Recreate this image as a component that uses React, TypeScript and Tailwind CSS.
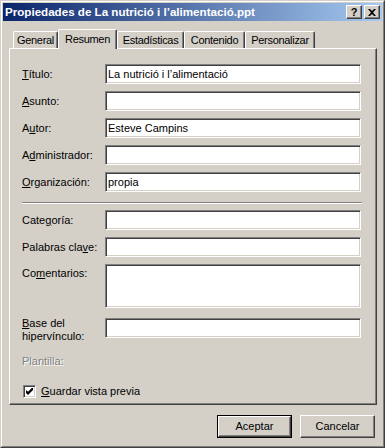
import React from "react";

const sunken =
  "bg-white border border-t-[#808080] border-l-[#808080] border-r-white border-b-white shadow-[inset_1px_1px_#404040,inset_-1px_-1px_#d4d0c8]";

function Input({ value, h = 20 }: { value?: string; h?: number }) {
  return (
    <div
      className={`${sunken} w-[256px] shrink-0 pl-[2px] leading-[14px] pt-[2px] whitespace-nowrap overflow-hidden`}
      style={{ height: h }}
    >
      {value}
    </div>
  );
}

function Row({
  label,
  value,
  h = 20,
  mt,
  labelPad = 3,
}: {
  label: React.ReactNode;
  value?: string;
  h?: number;
  mt: string;
  labelPad?: number;
}) {
  return (
    <div className={`flex items-start ${mt}`}>
      <div className="w-[83px] shrink-0 leading-[14px]" style={{ paddingTop: labelPad }}>
        {label}
      </div>
      <Input value={value} h={h} />
    </div>
  );
}

function Tab({ label, w, selected }: { label: string; w: number; selected?: boolean }) {
  return (
    <div
      className={
        selected
          ? "relative z-10 h-[20px] -mb-[1px] bg-[#d4d0c8] border-l border-t border-r border-l-white border-t-white border-r-[#404040] shadow-[inset_-1px_0_#808080] rounded-t-[2px] flex justify-center pt-[2px] leading-[14px] tracking-[-0.3px]"
          : "h-[17px] bg-[#d4d0c8] border-l border-t border-r border-l-white border-t-white border-r-[#404040] shadow-[inset_-1px_0_#808080] rounded-t-[2px] flex justify-center pt-[1px] leading-[14px] tracking-[-0.3px]"
      }
      style={{ width: w }}
    >
      {label}
    </div>
  );
}

const raised =
  "bg-[#d4d0c8] border border-t-white border-l-white border-r-[#404040] border-b-[#404040] shadow-[inset_-1px_-1px_#808080]";

export default function App() {
  return (
    <div className="w-[385px] h-[448px] bg-[#d4d0c8] font-['Liberation_Sans',Arial,sans-serif] text-[11px] text-black border border-t-[#d4d0c8] border-l-[#d4d0c8] border-r-[#404040] border-b-[#404040]">
      <div className="w-full h-full border border-t-white border-l-white border-r-[#808080] border-b-[#808080] p-[1px] flex flex-col">
        {/* Title bar */}
        <div className="h-[18px] shrink-0 flex items-center justify-between bg-[linear-gradient(to_right,#0a246a,#a6caf0)] pl-[2px] pr-[2px]">
          <div className="text-white font-bold text-[11.6px] leading-[14px] whitespace-nowrap">
            Propiedades de La nutrició i l’alimentació.ppt
          </div>
          <div className="flex gap-[2px]">
            <div className={`${raised} w-[16px] h-[14px] flex items-center justify-center font-bold text-[11px] leading-[11px]`}>
              ?
            </div>
            <div className={`${raised} w-[16px] h-[14px] flex items-center justify-center`}>
              <svg width="8" height="7" viewBox="0 0 8 7">
                <path d="M0 0h2l2 2 2-2h2L5 3.5 8 7H6L4 5 2 7H0l3-3.5z" fill="#000" />
              </svg>
            </div>
          </div>
        </div>

        {/* Tabs */}
        <div className="mt-[8px] ml-[10px] flex items-end h-[19px]">
          <Tab label="General" w={45} />
          <Tab label="Resumen" w={59} selected />
          <Tab label="Estadísticas" w={67} />
          <Tab label="Contenido" w={61} />
          <Tab label="Personalizar" w={70} />
        </div>

        {/* Panel */}
        <div className="ml-[6px] w-[368px] h-[357px] border border-t-white border-l-white border-r-[#404040] border-b-[#404040] shadow-[inset_-1px_-1px_#808080] pl-[12px] pt-[15px] flex flex-col">
          <Row mt="mt-0" label={<><u>T</u>ítulo:</>} value="La nutrició i l’alimentació" />
          <Row mt="mt-[7px]" label={<><u>A</u>sunto:</>} />
          <Row mt="mt-[7px]" label={<>A<u>u</u>tor:</>} value="Esteve Campins" />
          <Row mt="mt-[7px]" label={<>A<u>d</u>ministrador:</>} />
          <Row mt="mt-[7px]" label={<><u>O</u>rganización:</>} value="propia" />

          <div className="mt-[10px] w-[340px] h-[2px] border-t border-t-[#808080] border-b border-b-white" />

          <Row mt="mt-[6px]" label={<>Cate<u>g</u>oría:</>} />
          <Row mt="mt-[7px]" label={<>Palabras cla<u>v</u>e:</>} />
          <Row mt="mt-[7px]" label={<>Co<u>m</u>entarios:</>} h={44} labelPad={2} />
          <div className="flex items-start mt-[10px]">
            <div className="w-[83px] shrink-0 leading-[13px] -mt-[1px]">
              <u>B</u>ase del
              <br />
              hipervínculo:
            </div>
            <Input h={20} />
          </div>

          <div className="mt-[11px] leading-[14px] text-[#808080] [text-shadow:1px_1px_0_#fff]">Plantilla:</div>

          <div className="mt-[16px] flex items-center">
            <div className={`${sunken} ml-[1px] w-[13px] h-[13px] flex items-center justify-center`}>
              <svg width="7" height="7" viewBox="0 0 7 7">
                <path d="M0 2v3l2 2 5-5V-1L2 4z" fill="#000" />
                <path d="M0 2.5l2 2 5-5" stroke="#000" strokeWidth="1" fill="none" />
              </svg>
            </div>
            <div className="ml-[5px] leading-[14px]">
              <u>G</u>uardar vista previa
            </div>
          </div>
        </div>

        {/* Buttons */}
        <div className="mt-[10px] flex justify-end gap-[8px] pr-[7px]">
          <div className="w-[75px] h-[23px] border border-black">
            <div className={`${raised} w-full h-full flex items-center justify-center`}>Aceptar</div>
          </div>
          <div className={`${raised} w-[75px] h-[23px] flex items-center justify-center`}>Cancelar</div>
        </div>
      </div>
    </div>
  );
}
